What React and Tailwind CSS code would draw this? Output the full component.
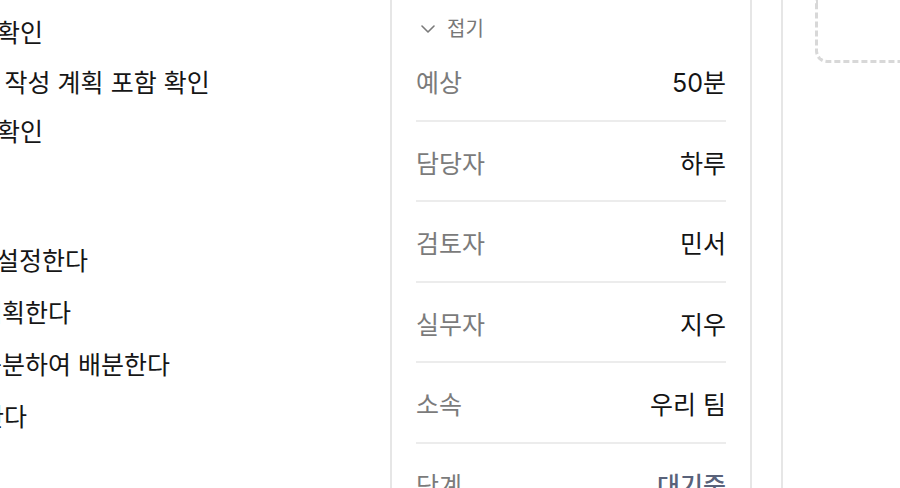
import React from 'react';

const checks = [
  { text: '일정 확인', cls: '-ml-[56px]' },
  { text: '검토 의견 - 작성 계획 포함 확인', cls: '-ml-[120px]' },
  { text: '산출물 확인', cls: '-ml-[79px]' },
];

const steps = [
  { text: '목표를 설정한다', cls: '-ml-[80px]' },
  { text: '일정을 계획한다', cls: '-ml-[97px]' },
  { text: '업무를 구분하여 배분한다', cls: '-ml-[97px]' },
  { text: '검토한다', cls: '-ml-[65px]' },
];

const details = [
  { label: '예상', value: '50분' },
  { label: '담당자', value: '하루' },
  { label: '검토자', value: '민서' },
  { label: '실무자', value: '지우' },
  { label: '소속', value: '우리 팀' },
  { label: '단계', value: '대기중', status: true },
];

function ChevronDown() {
  return (
    <svg width="14" height="8" viewBox="0 0 14 8" fill="none">
      <polyline points="1,1 7,7 13,1" stroke="#7a7a7a" strokeWidth="1.6" strokeLinecap="round" strokeLinejoin="round" />
    </svg>
  );
}

export default function App() {
  return (
    <div
      className="w-[900px] h-[488px] overflow-hidden bg-white flex"
      style={{ fontFamily: 'Inter, "Noto Sans CJK KR", sans-serif' }}
    >
      {/* left column: steps, scrolled partly out of view */}
      <div className="w-[390px] shrink-0 overflow-hidden text-[25px] text-[#161616]">
        <div className="pt-[9px]">
          {checks.map((c, i) => (
            <div key={i} className={`h-[49.5px] flex items-center whitespace-nowrap ${c.cls}`}>
              {c.text}
            </div>
          ))}
        </div>
        <div className="mt-[78px]">
          {steps.map((s, i) => (
            <div key={i} className={`h-[52px] flex items-center whitespace-nowrap ${s.cls}`}>
              {s.text}
            </div>
          ))}
        </div>
      </div>

      {/* detail panel */}
      <div className="w-[362px] shrink-0 border-x-2 border-[#e6e6e6] px-[24px] pt-[17px]">
        <button className="h-[24px] flex items-center gap-[12px] pl-[5px] text-[20px] text-[#777]">
          <ChevronDown />
          접기
        </button>
        <div>
          {details.map((d, i) => (
            <div key={i}>
              {i > 0 && <div className="h-[2px] bg-[#ececec]" />}
              <div className="h-[78.5px] pt-[7px] flex items-center justify-between text-[25px]">
                <span className="text-[#7b7b7b]">{d.label}</span>
                <span className={d.status ? 'text-[#59627a] font-medium' : 'text-[#141414]'}>{d.value}</span>
              </div>
            </div>
          ))}
        </div>
      </div>

      {/* right panel */}
      <div className="ml-[29px] w-[200px] shrink-0 border-l-2 border-[#e6e6e6] pl-[32px]">
        <div className="h-[63px] border-[3px] border-t-0 border-dashed border-[#d8d8d8] rounded-b-[12px]" />
      </div>
    </div>
  );
}
